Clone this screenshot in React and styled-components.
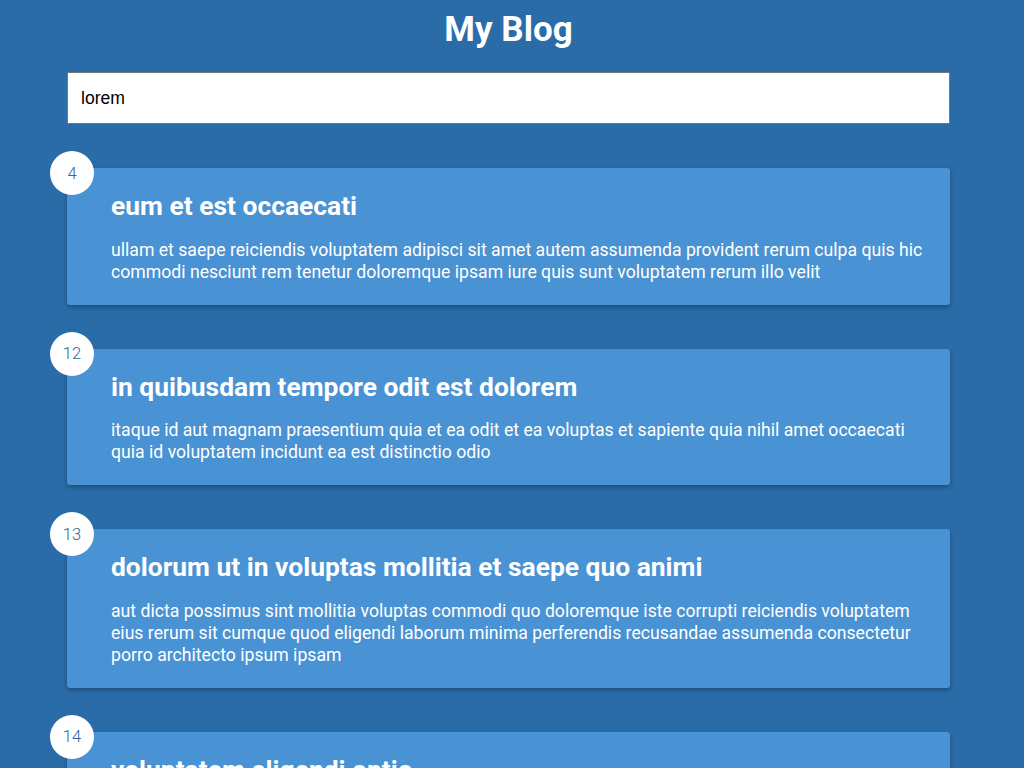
import React, { useState } from 'react'
import styled, { createGlobalStyle } from 'styled-components'

const GlobalStyle = createGlobalStyle`
  * { box-sizing: border-box; }
  body {
    margin: 0;
    background-color: #296ca8;
    color: #fff;
    font-family: Roboto, "Liberation Sans", sans-serif;
    overflow: hidden;
  }
`

const Page = styled.div`
  width: 1017px;
  min-height: 100vh;
  display: flex;
  flex-direction: column;
  align-items: center;
  padding-bottom: 110px;
`

const Title = styled.h1`
  margin: 9px 0 0;
  font-size: 35px;
  line-height: 41px;
  font-weight: 700;
  text-align: center;
`

const FilterContainer = styled.div`
  margin-top: 22px;
  width: 883px;
`

const Filter = styled.input`
  display: block;
  width: 100%;
  height: 52px;
  padding: 0 13px;
  font-family: "Liberation Sans", Arial, sans-serif;
  font-size: 17.6px;
  color: #000;
  background: #fff;
  border: 1px solid #767676;
  border-radius: 0;
  outline: none;
`

const Post = styled.article`
  position: relative;
  display: flex;
  width: 883px;
  margin: 44px 0 0;
  padding: 22px;
  background-color: #4992d3;
  border-radius: 3px;
  box-shadow: 0 2px 4px rgba(0, 0, 0, 0.3);
`

const Number = styled.div`
  position: absolute;
  top: -17px;
  left: -17px;
  width: 44px;
  height: 44px;
  border-radius: 50%;
  background: #fff;
  color: #2f68a0;
  font-size: 16.5px;
  font-weight: 300;
  display: flex;
  align-items: center;
  justify-content: center;
`

const Info = styled.div`
  margin-left: 22px;
`

const PostTitle = styled.h2`
  margin: 0;
  font-size: 26.4px;
  line-height: 32px;
  font-weight: 700;
`

const PostBody = styled.p`
  margin: 16.5px 0 0;
  font-size: 17.65px;
  line-height: 22px;
`

const posts = [
  {
    id: 4,
    title: 'eum et est occaecati',
    body: 'ullam et saepe reiciendis voluptatem adipisci sit amet autem assumenda provident rerum culpa quis hic commodi nesciunt rem tenetur doloremque ipsam iure quis sunt voluptatem rerum illo velit',
  },
  {
    id: 12,
    title: 'in quibusdam tempore odit est dolorem',
    body: 'itaque id aut magnam praesentium quia et ea odit et ea voluptas et sapiente quia nihil amet occaecati quia id voluptatem incidunt ea est distinctio odio',
  },
  {
    id: 13,
    title: 'dolorum ut in voluptas mollitia et saepe quo animi',
    body: 'aut dicta possimus sint mollitia voluptas commodi quo doloremque iste corrupti reiciendis voluptatem eius rerum sit cumque quod eligendi laborum minima perferendis recusandae assumenda consectetur porro architecto ipsum ipsam',
  },
  {
    id: 14,
    title: 'voluptatem eligendi optio',
    body: 'fuga et accusamus dolorum perferendis illo voluptas non doloremque neque facere ad qui dolorum molestiae beatae sed aut voluptas totam sit illum',
  },
]

export default function App() {
  const [term, setTerm] = useState('lorem')

  return (
    <Page>
      <GlobalStyle />
      <Title>My Blog</Title>
      <FilterContainer>
        <Filter
          type="text"
          value={term}
          onChange={e => setTerm(e.target.value)}
          placeholder="Filter posts..."
        />
      </FilterContainer>
      {posts.map(post => (
        <Post key={post.id}>
          <Number>{post.id}</Number>
          <Info>
            <PostTitle>{post.title}</PostTitle>
            <PostBody>{post.body}</PostBody>
          </Info>
        </Post>
      ))}
    </Page>
  )
}
